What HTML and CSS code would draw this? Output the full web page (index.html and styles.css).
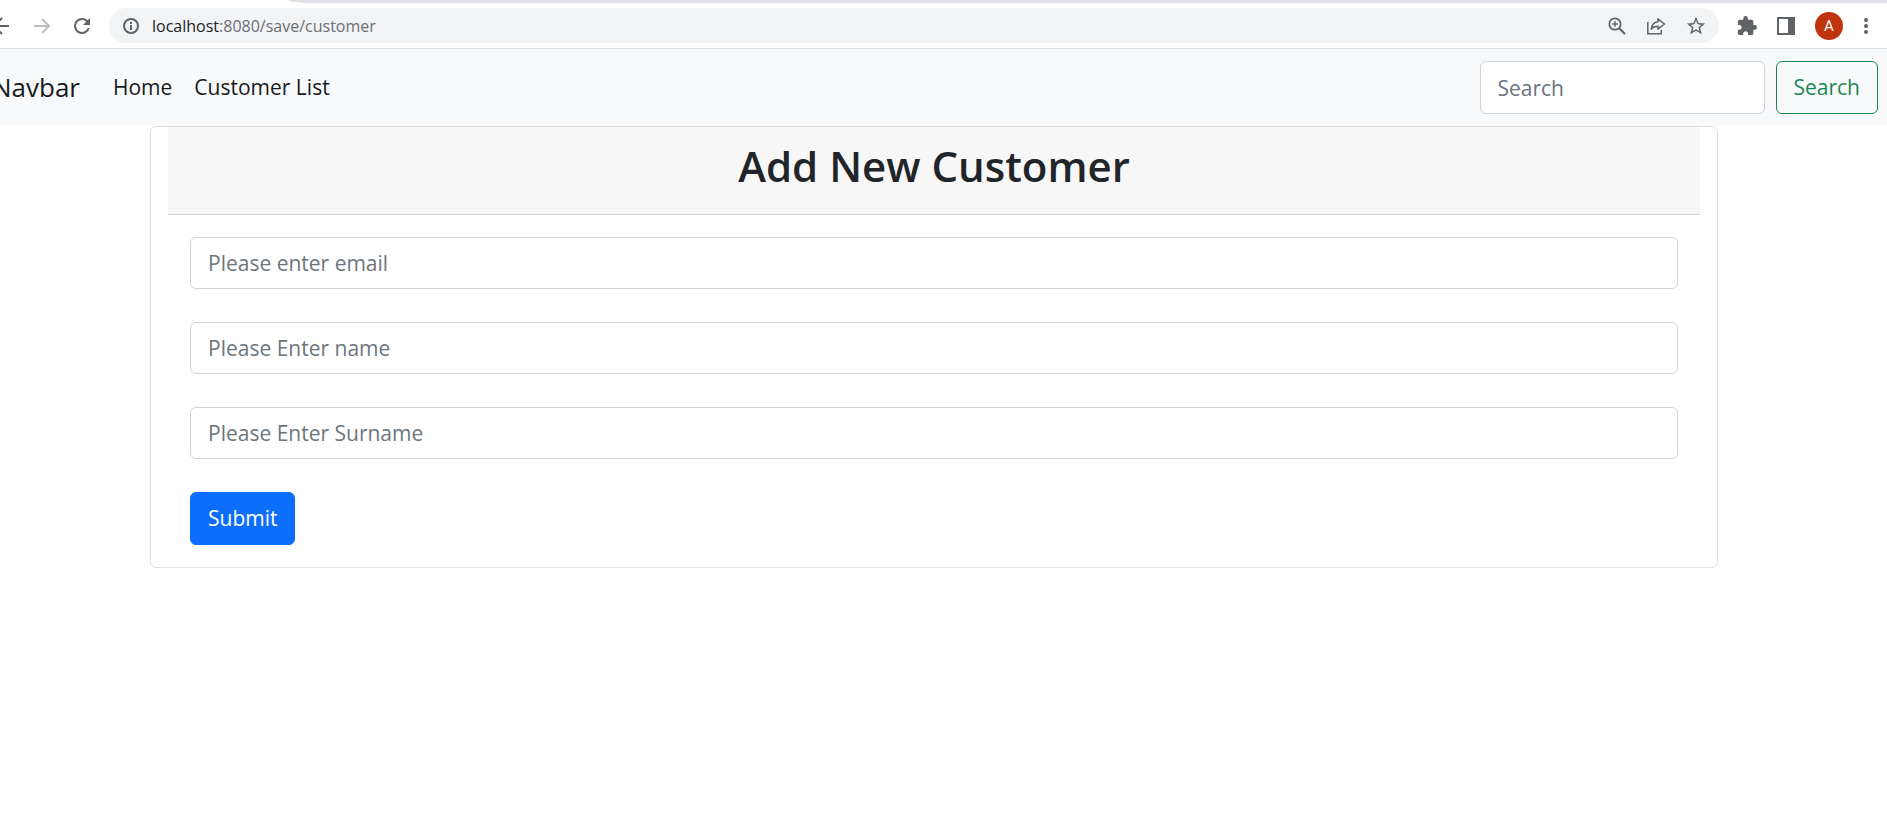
FILE: index.html
```
<!DOCTYPE html>
<html lang="en">
<head>
<meta charset="utf-8">
<meta name="viewport" content="width=device-width, initial-scale=1">
<title>Add New Customer</title>
<link rel="stylesheet" href="styles.css">
</head>
<body>
<div class="browser">
  <div class="tabstrip"></div>
  <div class="toolbar">
    <button class="icon-btn back" type="button" aria-label="Back"><svg width="24" height="24" viewBox="0 0 24 24" fill="none" stroke="#5f6368" stroke-width="2"><path d="M20 12H5M13 4l-8 8 8 8"/></svg></button>
    <button class="icon-btn" type="button" aria-label="Forward"><svg width="24" height="24" viewBox="0 0 24 24" fill="none" stroke="#bcbec1" stroke-width="2"><path d="M4 12h15M12 5l7 7-7 7"/></svg></button>
    <button class="icon-btn reload" type="button" aria-label="Reload"><svg width="24" height="24" viewBox="0 0 24 24"><path fill="#5f6368" d="M17.65 6.35A7.96 7.96 0 0 0 12 4a8 8 0 1 0 7.73 10h-2.08A6 6 0 1 1 12 6c1.66 0 3.14.69 4.22 1.78L13 11h7V4z"/></svg></button>
    <div class="omnibox">
      <svg class="info" width="18" height="18" viewBox="0 0 18 18"><circle cx="9" cy="9" r="7" fill="none" stroke="#5f6368" stroke-width="2"/><path fill="#5f6368" d="M8 8h2v5H8zM8 5h2v2H8z"/></svg>
      <span class="url"><span class="host">localhost</span>:8080/save/customer</span>
      <div class="omni-actions">
        <button class="icon-btn" type="button" aria-label="Zoom"><svg width="20" height="20" viewBox="0 0 20 20" fill="none" stroke="#5f6368"><circle cx="8" cy="8" r="5.7" stroke-width="1.7"/><path stroke-width="1.5" d="M8 5.200v5.600M5.200 8h5.600"/><path stroke-width="2.200" d="M12.200 12.200L18 18"/></svg></button>
        <button class="icon-btn" type="button" aria-label="Share"><svg width="20" height="20" viewBox="0 0 20 20" fill="none" stroke="#5f6368" stroke-width="1.500"><path d="M1.800 6v11.700h13.500V14"/><path stroke-linejoin="round" d="M12 2.800l6.400 5.200L12 13.200V10.200c-3 0-5 .8-6.700 2.900.5-4 2.800-6.900 6.700-7.300z"/></svg></button>
        <button class="icon-btn" type="button" aria-label="Bookmark"><svg width="22" height="22" viewBox="0 0 24 24"><path fill="#5f6368" d="M22 9.240l-7.190-.62L12 2 9.190 8.630 2 9.240l5.460 4.730L5.820 21 12 17.270 18.180 21l-1.630-7.030zM12 15.400l-3.760 2.270 1-4.280-3.320-2.880 4.380-.38L12 6.100l1.710 4.040 4.380.38-3.320 2.880 1 4.280z"/></svg></button>
      </div>
    </div>
    <div class="browser-actions">
      <button class="icon-btn" type="button" aria-label="Extensions"><svg width="20" height="20" viewBox="1 1 22 22"><path fill="#5f6368" d="M20.500 11H19V7c0-1.100-.9-2-2-2h-4V3.500a2.500 2.500 0 0 0-5 0V5H4c-1.100 0-1.990.9-1.990 2v3.800H3.500c1.490 0 2.700 1.210 2.700 2.700s-1.210 2.700-2.700 2.700H2V20c0 1.100.9 2 2 2h3.800v-1.500c0-1.490 1.210-2.700 2.700-2.700s2.700 1.210 2.700 2.700V22H17c1.100 0 2-.9 2-2v-4h1.500a2.500 2.500 0 0 0 0-5z"/></svg></button>
      <button class="icon-btn" type="button" aria-label="Side panel"><svg width="18" height="18" viewBox="0 0 18 18"><path fill="#5f6368" fill-rule="evenodd" d="M0 0h18v18H0zM2 2v14h9V2z"/></svg></button>
      <button class="avatar" type="button">A</button>
      <button class="icon-btn" type="button" aria-label="Menu"><svg width="6" height="18" viewBox="0 0 6 18" fill="#5f6368"><circle cx="3" cy="3" r="2"/><circle cx="3" cy="9" r="2"/><circle cx="3" cy="15" r="2"/></svg></button>
    </div>
  </div>
</div>
<nav class="navbar">
  <a class="brand" href="#">Navbar</a>
  <a class="nav-link" href="#">Home</a>
  <a class="nav-link" href="#">Customer List</a>
  <form class="search">
    <input class="control" type="search" placeholder="Search" aria-label="Search">
    <button class="btn btn-outline" type="button">Search</button>
  </form>
</nav>
<main class="content">
  <section class="card">
    <div class="card-header"><h1>Add New Customer</h1></div>
    <form class="card-body">
      <input class="control" type="email" placeholder="Please enter email" aria-label="Email">
      <input class="control" type="text" placeholder="Please Enter name" aria-label="Name">
      <input class="control" type="text" placeholder="Please Enter Surname" aria-label="Surname">
      <button class="btn btn-primary" type="button">Submit</button>
    </form>
  </section>
</main>
</body>
</html>
```
FILE: styles.css
```
* { box-sizing: border-box; }
body {
  margin: 0;
  background: #fff;
  color: #212529;
  font-family: "Segoe UI", "Open Sans", "Noto Sans", sans-serif;
  font-size: 21px;
  line-height: 33px;
  overflow-x: hidden;
}
input, button { font: inherit; }
button { cursor: pointer; }

.browser { border-bottom: 1px solid #d8dade; }
.tabstrip {
  height: 3px;
  margin-left: 288px;
  background: #dee1e6;
  border-bottom-left-radius: 24px 3px;
}
.toolbar {
  display: flex;
  align-items: center;
  padding: 5px 18px 5px 0;
}
.icon-btn {
  display: flex;
  flex: none;
  padding: 0;
  border: 0;
  background: none;
}
.back { margin-left: -11px; }
.back + .icon-btn { margin-left: 17px; }
.reload { margin: 0 15px 0 16px; }
.omnibox {
  display: flex;
  flex: 1;
  align-items: center;
  height: 35px;
  padding: 0 12px 0 13px;
  border-radius: 18px;
  background: #f1f3f4;
}
.info { flex: none; margin-right: 12px; }
.url {
  color: #6b6f74;
  font-size: 16px;
  line-height: 24px;
}
.host { color: #202124; }
.omni-actions {
  display: flex;
  align-items: center;
  gap: 19px;
  margin-left: auto;
}
.browser-actions {
  display: flex;
  align-items: center;
  gap: 20px;
  margin-left: 18px;
}
.avatar {
  width: 28px;
  height: 28px;
  padding: 0;
  border: 0;
  border-radius: 50%;
  background: #c0330c;
  color: #fff;
  font-family: Roboto, sans-serif;
  font-size: 15px;
  line-height: 28px;
}

.navbar {
  display: flex;
  align-items: center;
  padding: 12px 9px 12px 0;
  background: #f8f9fa;
}
.brand, .nav-link { text-decoration: none; color: #17191c; }
.brand {
  margin: 0 22px 0 -8px;
  font-size: 26px;
}
.nav-link { padding: 0 11px; }
.search {
  display: flex;
  gap: 11px;
  margin-left: auto;
}
.search .control { width: 285px; }

.control {
  display: block;
  width: 100%;
  padding: 9px 17px;
  border: 1px solid #ced4da;
  border-radius: 6px;
  outline: 0;
  background: #fff;
  color: #212529;
  line-height: 32px;
}
.control::placeholder { color: #6c757d; opacity: 1; }
.btn {
  padding: 9px 17px;
  border: 1px solid;
  border-radius: 6px;
  line-height: 33px;
}
.btn-outline { border-color: #198754; background: transparent; color: #198754; }
.btn-primary { border-color: #0d6efd; background: #0d6efd; color: #fff; }

.content { padding: 0 169px 0 150px; }
.card {
  padding: 0 17px;
  border: 1px solid #dfdfdf;
  border-radius: 6px;
}
.card-header {
  padding: 12px 22px 22px;
  border-bottom: 1px solid #d5d5d5;
  background: #f7f7f7;
  text-align: center;
}
h1 {
  margin: 0;
  font-size: 42px;
  font-weight: 600;
  line-height: 53px;
}
.card-body {
  display: flex;
  flex-direction: column;
  align-items: flex-start;
  gap: 33px;
  padding: 22px;
}
```
